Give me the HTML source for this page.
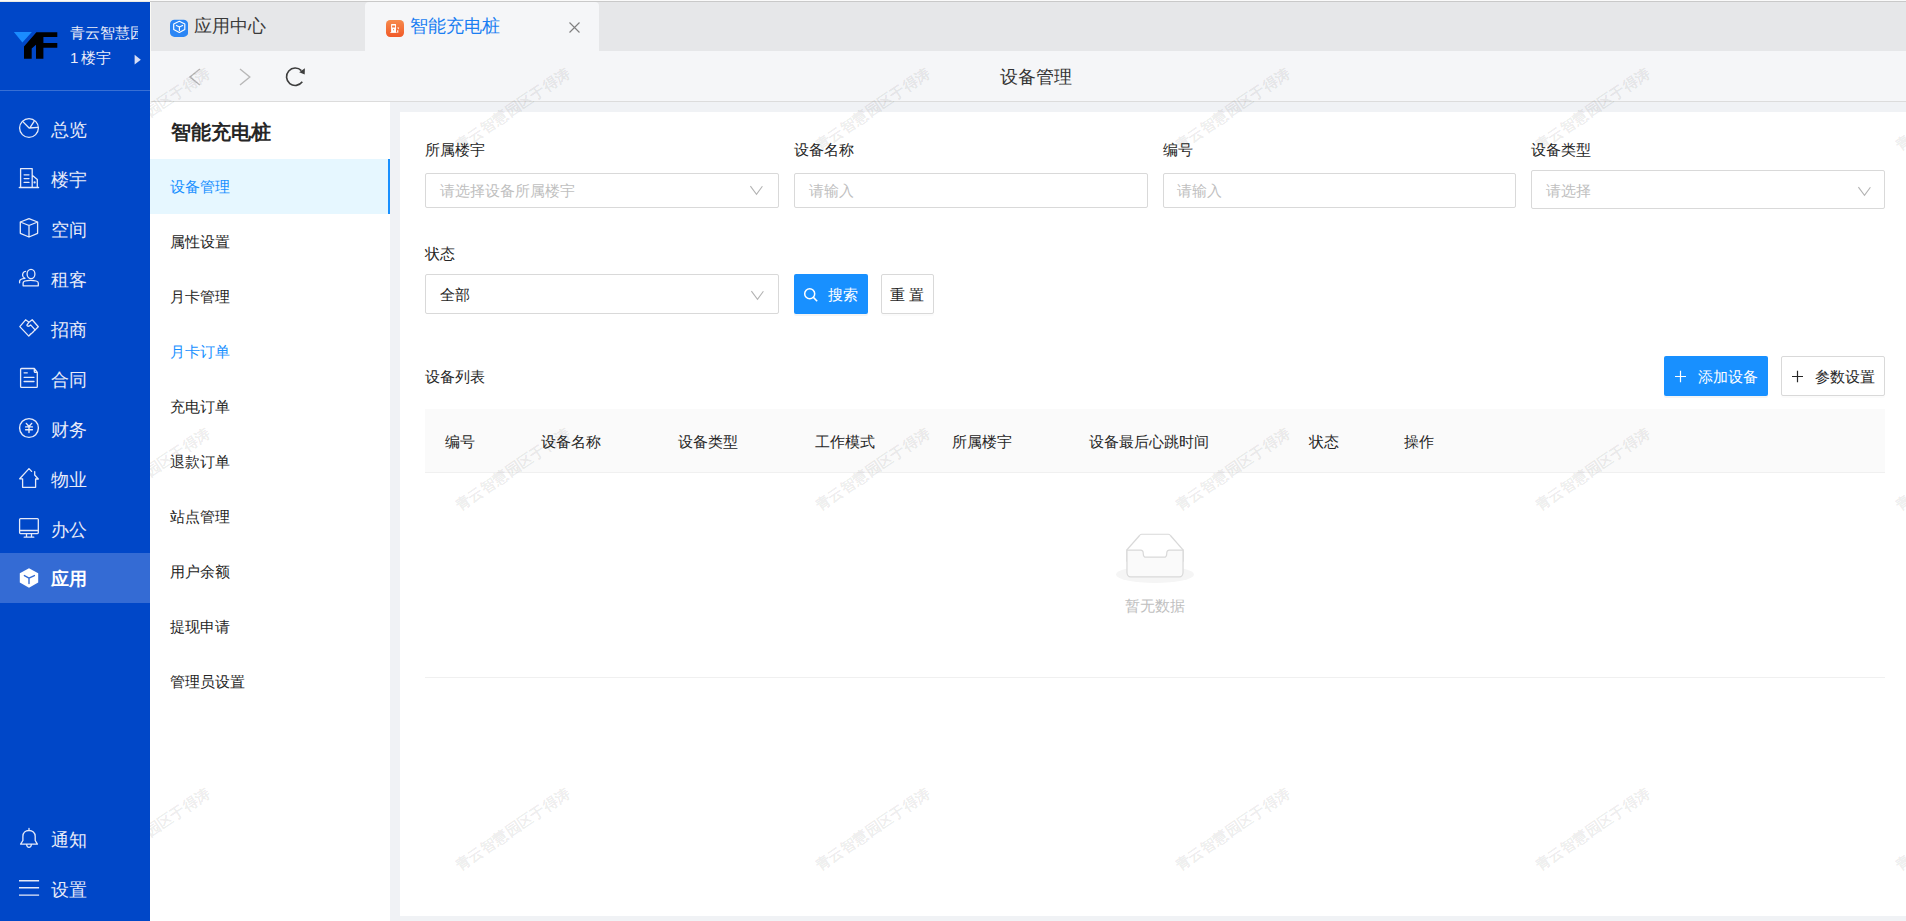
<!DOCTYPE html>
<html><head><meta charset="utf-8">
<style>
*{box-sizing:border-box;margin:0;padding:0}
html,body{width:1906px;height:921px;overflow:hidden;background:#f0f2f5;font-family:"Liberation Sans",sans-serif;color:#333}
.abs{position:absolute}
.t{position:absolute;white-space:nowrap;line-height:1}
#side{position:absolute;left:0;top:0;width:150px;height:921px;background:#0047c8}
.mi{position:absolute;left:0;width:150px;height:50px}
.mi .ic{position:absolute;left:19px;top:10px;width:20px;height:20px}
.mi .tx{position:absolute;left:51px;top:12px;font-size:18px;line-height:20px;color:#eef0fa;white-space:nowrap}
.sub{position:absolute;left:150px;width:240px;height:55px}
.sub .tx{position:absolute;left:20px;top:19px;font-size:15px;line-height:17px;color:#333;white-space:nowrap}
.lbl{position:absolute;font-size:15px;line-height:17px;color:#262626;white-space:nowrap}
.inp{position:absolute;border:1px solid #d9d9d9;border-radius:2px;background:#fff}
.ph{position:absolute;left:14px;font-size:15px;line-height:17px;color:#bfbfbf;white-space:nowrap}
.th{position:absolute;top:433px;font-size:15px;line-height:17px;color:#262626;white-space:nowrap}
</style></head><body>
<!-- top strip -->
<div class="abs" style="left:0;top:0;width:1906px;height:2px;background:#fafafa"></div>
<div class="abs" style="left:150px;top:1px;width:1756px;height:1px;background:#c9c9c9"></div><div class="abs" style="left:0;top:1px;width:150px;height:1px;background:#ece9e2"></div>

<!-- tab bar -->
<div class="abs" style="left:150px;top:2px;width:1756px;height:49px;background:#e6e7e9"></div>
<div class="abs" style="left:150px;top:2px;width:1px;height:99px;background:#fbfaf5"></div>
<!-- active tab -->
<div class="abs" style="left:365px;top:2px;width:234px;height:49px;background:#f5f6f8;border-radius:4px 4px 0 0"></div>

<!-- nav bar -->
<div class="abs" style="left:151px;top:51px;width:1755px;height:50px;background:#f5f6f8"></div>
<div class="abs" style="left:151px;top:101px;width:1755px;height:1px;background:#dcdcdc"></div>

<!-- sub sidebar -->
<div class="abs" style="left:150px;top:102px;width:240px;height:819px;background:#fff"></div>

<!-- card -->
<div class="abs" style="left:400px;top:112px;width:1506px;height:804px;background:#fff"></div>


<!-- tabs content -->
<svg class="abs" style="left:170px;top:19px" width="18" height="19" viewBox="0 0 18 19">
<rect x="0" y="0.8" width="18.1" height="17.1" rx="4.5" fill="#2b86f5"/>
<path fill="none" stroke="#fff" stroke-width="1.15" stroke-linejoin="round" stroke-linecap="round" d="M9.3 2.3L14.8 5V10.6L9.3 13.5L3.7 10.6V5ZM6.4 6.4L9.4 7.9L12.6 6.4M9.4 7.9V11.4"/></svg>
<div class="t" style="left:194px;top:17px;font-size:18px;color:#3a3a3a">应用中心</div>
<svg class="abs" style="left:386px;top:20px" width="18" height="17" viewBox="0 0 18 17">
<defs><linearGradient id="og" x1="0" y1="0" x2="0" y2="1"><stop offset="0" stop-color="#f68a4c"/><stop offset="1" stop-color="#f15a29"/></linearGradient></defs>
<rect x="0" y="0" width="18" height="17" rx="4.2" fill="url(#og)"/>
<path fill="#fff" fill-rule="evenodd" d="M5.6 4H9.5Q10 4 10 4.6V12.6H5.1V4.6Q5.1 4 5.6 4ZM6.1 5.5V7.4H9.1V5.5ZM7.6 8.7L6.9 9.9Q7.6 10.5 8.3 9.9Z"/>
<path fill="#fff" d="M4.3 12.3H10.6V12.9H4.3ZM11.2 10.2H12.3V12.7H11.2ZM11.3 7.5H13.2L12.3 9.6Z"/></svg>
<div class="t" style="left:410px;top:17px;font-size:18px;color:#1a7ef2">智能充电桩</div>
<svg class="abs" style="left:568px;top:21px" width="13" height="13" viewBox="0 0 13 13"><path d="M1.5 1.5L11.5 11.5M11.5 1.5L1.5 11.5" stroke="#808080" stroke-width="1.15"/></svg>

<!-- nav -->
<svg class="abs" style="left:185px;top:64px" width="130" height="26" viewBox="0 0 130 26">
<path fill="none" stroke="#b8b8b8" stroke-width="1.4" d="M14.8 5L5 13L14.8 21M55 5L64.8 13L55 21"/>
<path fill="none" stroke="#3d3d3d" stroke-width="1.6" d="M117.3 17.8A8.7 8.7 0 1 1 116.4 6.6"/>
<path fill="#3d3d3d" d="M119.9 4.2L119.7 10.4L114.2 8.3Z"/>
</svg>
<div class="t" style="left:1000px;top:68px;font-size:18px;color:#333">设备管理</div>

<!-- sub sidebar -->
<div class="t" style="left:170.5px;top:122px;font-size:20px;font-weight:bold;color:#262626">智能充电桩</div>
<div class="abs" style="left:150px;top:159px;width:240px;height:55px;background:#e6f7ff"></div>
<div class="abs" style="left:388px;top:159px;width:2px;height:55px;background:#1890ff"></div>
<div class="t" style="left:170px;top:179px;font-size:15px;color:#1890ff">设备管理</div>
<div class="t" style="left:170px;top:234px;font-size:15px;color:#262626">属性设置</div>
<div class="t" style="left:170px;top:289px;font-size:15px;color:#262626">月卡管理</div>
<div class="t" style="left:170px;top:344px;font-size:15px;color:#1890ff">月卡订单</div>
<div class="t" style="left:170px;top:399px;font-size:15px;color:#262626">充电订单</div>
<div class="t" style="left:170px;top:454px;font-size:15px;color:#262626">退款订单</div>
<div class="t" style="left:170px;top:509px;font-size:15px;color:#262626">站点管理</div>
<div class="t" style="left:170px;top:564px;font-size:15px;color:#262626">用户余额</div>
<div class="t" style="left:170px;top:619px;font-size:15px;color:#262626">提现申请</div>
<div class="t" style="left:170px;top:674px;font-size:15px;color:#262626">管理员设置</div>

<!-- form -->
<div class="t" style="left:425px;top:142px;font-size:15px;color:#262626">所属楼宇</div>
<div class="t" style="left:794px;top:142px;font-size:15px;color:#262626">设备名称</div>
<div class="t" style="left:1163px;top:142px;font-size:15px;color:#262626">编号</div>
<div class="t" style="left:1531px;top:142px;font-size:15px;color:#262626">设备类型</div>

<div class="inp" style="left:425px;top:173px;width:354px;height:35px"></div>
<div class="t" style="left:440px;top:182.5px;font-size:15px;color:#bfbfbf">请选择设备所属楼宇</div>
<svg class="abs" style="left:749px;top:184px" width="15" height="12" viewBox="0 0 15 12"><path d="M1.4 2.2L7.5 10.4L13.4 2.2" fill="none" stroke="#b3b3b3" stroke-width="1.1"/></svg>
<div class="inp" style="left:794px;top:173px;width:354px;height:35px"></div>
<div class="t" style="left:809px;top:182.5px;font-size:15px;color:#bfbfbf">请输入</div>
<div class="inp" style="left:1163px;top:173px;width:353px;height:35px"></div>
<div class="t" style="left:1177px;top:182.5px;font-size:15px;color:#bfbfbf">请输入</div>
<div class="inp" style="left:1531px;top:170px;width:354px;height:39px"></div>
<div class="t" style="left:1546px;top:182.5px;font-size:15px;color:#bfbfbf">请选择</div>
<svg class="abs" style="left:1856.5px;top:184.5px" width="15" height="12" viewBox="0 0 15 12"><path d="M1.4 2.2L7.5 10.4L13.4 2.2" fill="none" stroke="#b3b3b3" stroke-width="1.1"/></svg>

<div class="t" style="left:425px;top:246px;font-size:15px;color:#262626">状态</div>
<div class="inp" style="left:425px;top:274px;width:354px;height:40px"></div>
<div class="t" style="left:440px;top:287px;font-size:15px;color:#262626">全部</div>
<svg class="abs" style="left:750px;top:289px" width="15" height="12" viewBox="0 0 15 12"><path d="M1.4 2.2L7.5 10.4L13.4 2.2" fill="none" stroke="#b3b3b3" stroke-width="1.1"/></svg>

<div class="abs" style="left:794px;top:274px;width:74px;height:40px;background:#1890ff;border-radius:2px;box-shadow:0 2px 0 rgba(0,0,0,0.045)"></div>
<svg class="abs" style="left:803px;top:287px" width="16" height="16" viewBox="0 0 16 16"><circle cx="6.7" cy="6.7" r="5" fill="none" stroke="#fff" stroke-width="1.5"/><path d="M10.4 10.4L14.2 14.2" stroke="#fff" stroke-width="1.5"/></svg>
<div class="t" style="left:828px;top:287px;font-size:15px;color:#fff">搜索</div>
<div class="inp" style="left:881px;top:274px;width:53px;height:40px;box-shadow:0 2px 0 rgba(0,0,0,0.016)"></div>
<div class="t" style="left:890px;top:287px;font-size:15px;color:#262626;letter-spacing:4px">重置</div>

<!-- table -->
<div class="t" style="left:425px;top:369px;font-size:15px;color:#262626">设备列表</div>
<div class="abs" style="left:1664px;top:356px;width:104px;height:40px;background:#1890ff;border-radius:2px;box-shadow:0 2px 0 rgba(0,0,0,0.045)"></div>
<svg class="abs" style="left:1674px;top:370px" width="13" height="13" viewBox="0 0 13 13"><path d="M6.5 0.8V12.2M1 6.5H12" stroke="#fff" stroke-width="1.2"/></svg>
<div class="t" style="left:1698px;top:369px;font-size:15px;color:#fff">添加设备</div>
<div class="inp" style="left:1781px;top:356px;width:104px;height:40px;box-shadow:0 2px 0 rgba(0,0,0,0.016)"></div>
<svg class="abs" style="left:1791px;top:370px" width="13" height="13" viewBox="0 0 13 13"><path d="M6.5 0.8V12.2M1 6.5H12" stroke="#262626" stroke-width="1.2"/></svg>
<div class="t" style="left:1815px;top:369px;font-size:15px;color:#262626">参数设置</div>

<div class="abs" style="left:425px;top:409px;width:1460px;height:63px;background:#fafafa"></div>
<div class="abs" style="left:425px;top:472px;width:1460px;height:1px;background:#f0f0f0"></div>
<div class="th" style="left:445px">编号</div>
<div class="th" style="left:541px">设备名称</div>
<div class="th" style="left:678px">设备类型</div>
<div class="th" style="left:815px">工作模式</div>
<div class="th" style="left:952px">所属楼宇</div>
<div class="th" style="left:1089px">设备最后心跳时间</div>
<div class="th" style="left:1309px">状态</div>
<div class="th" style="left:1404px">操作</div>

<svg class="abs" style="left:1116px;top:533px" width="78" height="50" viewBox="0 0 64 41"><g transform="translate(0 1)" fill="none" fill-rule="evenodd"><ellipse fill="#f5f5f5" cx="32" cy="33" rx="32" ry="7"/><g fill-rule="nonzero" stroke="#d9d9d9"><path d="M55 12.76L44.854 1.258C44.367.474 43.656 0 42.907 0H21.093c-.749 0-1.46.474-1.947 1.257L9 12.761V22h46v-9.24z"/><path d="M41.613 15.931c0-1.605.994-2.93 2.227-2.931H55v18.137C55 33.26 53.68 35 52.05 35h-40.1C10.32 35 9 33.259 9 31.137V13h11.16c1.233 0 2.227 1.323 2.227 2.928v.022c0 1.605 1.005 2.901 2.237 2.901h14.752c1.232 0 2.237-1.308 2.237-2.913v-.007z" fill="#fafafa"/></g></g></svg>
<div class="t" style="left:1125px;top:598px;font-size:15px;color:#bfbfbf">暂无数据</div>
<div class="abs" style="left:425px;top:677px;width:1460px;height:1px;background:#f0f0f0"></div>

<!-- watermark -->
<div class="abs" style="left:150px;top:52px;width:1756px;height:869px;overflow:hidden;pointer-events:none"><div class="t" style="left:3.3px;top:57.0px;width:0;height:0"><div style="position:absolute;left:0;top:0;transform:translate(-50%,-50%) rotate(-34deg);font-size:14.8px;line-height:16px;font-weight:bold;color:rgba(0,0,0,0.085);white-space:nowrap">青云智慧园区于得涛</div></div><div class="t" style="left:363.3px;top:57.0px;width:0;height:0"><div style="position:absolute;left:0;top:0;transform:translate(-50%,-50%) rotate(-34deg);font-size:14.8px;line-height:16px;font-weight:bold;color:rgba(0,0,0,0.085);white-space:nowrap">青云智慧园区于得涛</div></div><div class="t" style="left:723.3px;top:57.0px;width:0;height:0"><div style="position:absolute;left:0;top:0;transform:translate(-50%,-50%) rotate(-34deg);font-size:14.8px;line-height:16px;font-weight:bold;color:rgba(0,0,0,0.085);white-space:nowrap">青云智慧园区于得涛</div></div><div class="t" style="left:1083.3px;top:57.0px;width:0;height:0"><div style="position:absolute;left:0;top:0;transform:translate(-50%,-50%) rotate(-34deg);font-size:14.8px;line-height:16px;font-weight:bold;color:rgba(0,0,0,0.085);white-space:nowrap">青云智慧园区于得涛</div></div><div class="t" style="left:1443.3px;top:57.0px;width:0;height:0"><div style="position:absolute;left:0;top:0;transform:translate(-50%,-50%) rotate(-34deg);font-size:14.8px;line-height:16px;font-weight:bold;color:rgba(0,0,0,0.085);white-space:nowrap">青云智慧园区于得涛</div></div><div class="t" style="left:1803.3px;top:57.0px;width:0;height:0"><div style="position:absolute;left:0;top:0;transform:translate(-50%,-50%) rotate(-34deg);font-size:14.8px;line-height:16px;font-weight:bold;color:rgba(0,0,0,0.085);white-space:nowrap">青云智慧园区于得涛</div></div><div class="t" style="left:3.3px;top:417.0px;width:0;height:0"><div style="position:absolute;left:0;top:0;transform:translate(-50%,-50%) rotate(-34deg);font-size:14.8px;line-height:16px;font-weight:bold;color:rgba(0,0,0,0.085);white-space:nowrap">青云智慧园区于得涛</div></div><div class="t" style="left:363.3px;top:417.0px;width:0;height:0"><div style="position:absolute;left:0;top:0;transform:translate(-50%,-50%) rotate(-34deg);font-size:14.8px;line-height:16px;font-weight:bold;color:rgba(0,0,0,0.085);white-space:nowrap">青云智慧园区于得涛</div></div><div class="t" style="left:723.3px;top:417.0px;width:0;height:0"><div style="position:absolute;left:0;top:0;transform:translate(-50%,-50%) rotate(-34deg);font-size:14.8px;line-height:16px;font-weight:bold;color:rgba(0,0,0,0.085);white-space:nowrap">青云智慧园区于得涛</div></div><div class="t" style="left:1083.3px;top:417.0px;width:0;height:0"><div style="position:absolute;left:0;top:0;transform:translate(-50%,-50%) rotate(-34deg);font-size:14.8px;line-height:16px;font-weight:bold;color:rgba(0,0,0,0.085);white-space:nowrap">青云智慧园区于得涛</div></div><div class="t" style="left:1443.3px;top:417.0px;width:0;height:0"><div style="position:absolute;left:0;top:0;transform:translate(-50%,-50%) rotate(-34deg);font-size:14.8px;line-height:16px;font-weight:bold;color:rgba(0,0,0,0.085);white-space:nowrap">青云智慧园区于得涛</div></div><div class="t" style="left:1803.3px;top:417.0px;width:0;height:0"><div style="position:absolute;left:0;top:0;transform:translate(-50%,-50%) rotate(-34deg);font-size:14.8px;line-height:16px;font-weight:bold;color:rgba(0,0,0,0.085);white-space:nowrap">青云智慧园区于得涛</div></div><div class="t" style="left:3.3px;top:777.0px;width:0;height:0"><div style="position:absolute;left:0;top:0;transform:translate(-50%,-50%) rotate(-34deg);font-size:14.8px;line-height:16px;font-weight:bold;color:rgba(0,0,0,0.085);white-space:nowrap">青云智慧园区于得涛</div></div><div class="t" style="left:363.3px;top:777.0px;width:0;height:0"><div style="position:absolute;left:0;top:0;transform:translate(-50%,-50%) rotate(-34deg);font-size:14.8px;line-height:16px;font-weight:bold;color:rgba(0,0,0,0.085);white-space:nowrap">青云智慧园区于得涛</div></div><div class="t" style="left:723.3px;top:777.0px;width:0;height:0"><div style="position:absolute;left:0;top:0;transform:translate(-50%,-50%) rotate(-34deg);font-size:14.8px;line-height:16px;font-weight:bold;color:rgba(0,0,0,0.085);white-space:nowrap">青云智慧园区于得涛</div></div><div class="t" style="left:1083.3px;top:777.0px;width:0;height:0"><div style="position:absolute;left:0;top:0;transform:translate(-50%,-50%) rotate(-34deg);font-size:14.8px;line-height:16px;font-weight:bold;color:rgba(0,0,0,0.085);white-space:nowrap">青云智慧园区于得涛</div></div><div class="t" style="left:1443.3px;top:777.0px;width:0;height:0"><div style="position:absolute;left:0;top:0;transform:translate(-50%,-50%) rotate(-34deg);font-size:14.8px;line-height:16px;font-weight:bold;color:rgba(0,0,0,0.085);white-space:nowrap">青云智慧园区于得涛</div></div><div class="t" style="left:1803.3px;top:777.0px;width:0;height:0"><div style="position:absolute;left:0;top:0;transform:translate(-50%,-50%) rotate(-34deg);font-size:14.8px;line-height:16px;font-weight:bold;color:rgba(0,0,0,0.085);white-space:nowrap">青云智慧园区于得涛</div></div></div>
<!-- sidebar -->
<div id="side" style="top:2px;height:919px"></div>
<div class="abs" style="left:0;top:90px;width:150px;height:1px;background:rgba(255,255,255,0.22)"></div>
<div class="abs" style="left:0;top:553px;width:150px;height:50px;background:#346bd4"></div>


<!-- logo -->
<svg class="abs" style="left:0;top:0" width="150" height="90" viewBox="0 0 150 90">
<polygon fill="#1a8cff" points="13.9,32 31.9,32 22.4,42.5"/>
<polygon fill="#000" points="36.4,32.2 57.3,32.2 57.3,37.1 43.4,37.1 43.4,43.1 57.3,43.1 57.3,47.7 43.4,47.7 43.4,58.8 36,58.8 36,44.8 31.7,48.5 31.7,58.8 24,58.8 24,46.4"/>
<polygon fill="#d8def5" points="134.6,54.8 140.8,59.7 134.6,64.6"/>
</svg>
<div class="abs" style="left:70px;top:22px;width:68px;height:22px;overflow:hidden"><div class="t" style="left:0;top:3px;font-size:15px;color:#e9ecf8">青云智慧园区</div></div>
<div class="t" style="left:70px;top:49.5px;font-size:15px;color:#e9ecf8">1</div><div class="t" style="left:80.5px;top:49.5px;font-size:15px;color:#e9ecf8">楼宇</div>

<svg class="abs" style="left:15px;top:114px" width="28" height="28" viewBox="0 0 28 28" fill="none" stroke="#e6eaf8" stroke-width="1.3" stroke-linecap="round" stroke-linejoin="round">
<circle cx="14" cy="14" r="9.4"/><path d="M14.1 14L7.6 7.4M14.1 14L23.1 13.4M15.2 13.4L19.1 7.3"/></svg>
<svg class="abs" style="left:15px;top:164px" width="28" height="28" viewBox="0 0 28 28" fill="none" stroke="#e6eaf8" stroke-width="1.3" stroke-linecap="round" stroke-linejoin="round">
<path d="M5.6 23.4V4.6H17.2V23.4M17.2 11.3L22.3 15.5V23.4M4.3 23.5H23.6M9.1 10.8H14M9.1 14.6H14M9.1 18.4H14"/><circle cx="19.6" cy="18.4" r="0.5"/></svg>
<svg class="abs" style="left:15px;top:214px" width="28" height="28" viewBox="0 0 28 28" fill="none" stroke="#e6eaf8" stroke-width="1.3" stroke-linecap="round" stroke-linejoin="round">
<path d="M14 4.7L22.6 8V19.3L14 23L5.3 19.3V8ZM5.3 8L14 11.5L22.6 8M14 11.5V23"/></svg>
<svg class="abs" style="left:15px;top:264px" width="28" height="28" viewBox="0 0 28 28" fill="none" stroke="#e6eaf8" stroke-width="1.3" stroke-linecap="round" stroke-linejoin="round">
<ellipse cx="16" cy="10" rx="3.9" ry="4.6"/><path d="M8.1 21.8V19C8.1 17.5 11.5 16.4 15.7 16.4C19.9 16.4 23.3 17.5 23.3 19V21.8ZM10.6 7.3C8.6 7.4 7.5 9.3 7.6 11.2C7.6 12.5 8.4 13.6 10 14.3C6.6 14.7 4.6 16 4.6 17.2V18.8"/></svg>
<svg class="abs" style="left:15px;top:314px" width="28" height="28" viewBox="0 0 28 28" fill="none" stroke="#e6eaf8" stroke-width="1.3" stroke-linecap="round" stroke-linejoin="round">
<path d="M4.8 12.6L10.6 5.8L14 8.2L17.2 5.8L23.3 12.8L13.8 22.1ZM14 8.2L11.9 11.2Q12.8 12.9 14.3 11.9L15.6 10.9L20.3 16.1M14.8 20.8L16.2 19.6M17 19L18.4 17.8"/></svg>
<svg class="abs" style="left:15px;top:364px" width="28" height="28" viewBox="0 0 28 28" fill="none" stroke="#e6eaf8" stroke-width="1.3" stroke-linecap="round" stroke-linejoin="round">
<path d="M6.5 4.5H19.3L22.3 8.4V22.5Q22.3 23.4 21.4 23.4H6.5Q5.6 23.4 5.6 22.5V5.4Q5.6 4.5 6.5 4.5ZM19.3 4.5V7.5Q19.3 8.4 20.2 8.4H22.3M9.1 8.8H12.3M9.1 13.3H19M9.1 17.5H19"/></svg>
<svg class="abs" style="left:15px;top:414px" width="28" height="28" viewBox="0 0 28 28" fill="none" stroke="#e6eaf8" stroke-width="1.4" stroke-linecap="round" stroke-linejoin="round">
<circle cx="14" cy="14" r="9.4"/><path d="M11.3 9.4L14 12.5L16.7 9.4M10.6 12.9H17.4M10.6 15.8H17.4M14 12.5V18.6"/></svg>
<svg class="abs" style="left:15px;top:464px" width="28" height="28" viewBox="0 0 28 28" fill="none" stroke="#e6eaf8" stroke-width="1.3" stroke-linecap="round" stroke-linejoin="round">
<path d="M16.6 7.4L14 4.6L4.7 14.8H7.6V23.3H20.6V15H23.3L19.7 11V7.6"/></svg>
<svg class="abs" style="left:15px;top:514px" width="28" height="28" viewBox="0 0 28 28" fill="none" stroke="#e6eaf8" stroke-width="1.3" stroke-linecap="round" stroke-linejoin="round">
<path d="M5.6 4.6H22.4Q23.3 4.6 23.3 5.5V18.6Q23.3 19.6 22.4 19.6H5.6Q4.6 19.6 4.6 18.6V5.5Q4.6 4.6 5.6 4.6ZM4.6 16.5H23.3M11.5 19.8V23M16.5 19.8V23M9.2 23.2H18.8"/></svg>
<svg class="abs" style="left:15px;top:564px" width="28" height="28" viewBox="0 0 28 28">
<path fill="#fff" d="M14 4.2L23.2 9.2V18.6L14 23.8L4.8 18.6V9.2Z"/><path fill="none" stroke="#346bd4" stroke-width="1.4" stroke-linecap="round" stroke-linejoin="round" d="M9.4 11.6L14 14.1L19.4 11.6M14 14.1V19.6"/></svg>

<div class="t" style="left:51px;top:120.5px;font-size:18px;color:#e9ecf8">总览</div>
<div class="t" style="left:51px;top:170.5px;font-size:18px;color:#e9ecf8">楼宇</div>
<div class="t" style="left:51px;top:220.5px;font-size:18px;color:#e9ecf8">空间</div>
<div class="t" style="left:51px;top:270.5px;font-size:18px;color:#e9ecf8">租客</div>
<div class="t" style="left:51px;top:320.5px;font-size:18px;color:#e9ecf8">招商</div>
<div class="t" style="left:51px;top:370.5px;font-size:18px;color:#e9ecf8">合同</div>
<div class="t" style="left:51px;top:420.5px;font-size:18px;color:#e9ecf8">财务</div>
<div class="t" style="left:51px;top:470.5px;font-size:18px;color:#e9ecf8">物业</div>
<div class="t" style="left:51px;top:520.5px;font-size:18px;color:#e9ecf8">办公</div>
<div class="t" style="left:51px;top:570px;font-size:18px;color:#fff;font-weight:bold">应用</div>

<svg class="abs" style="left:15px;top:824px" width="28" height="28" viewBox="0 0 28 28" fill="none" stroke="#e6eaf8" stroke-width="1.3" stroke-linecap="round" stroke-linejoin="round">
<path d="M14 4.4V6.5M5.6 20.2H22.4L20.2 16.5V12.3C20.2 8.8 17.4 6.5 14 6.5C10.6 6.5 7.9 8.8 7.9 12.3V16.5ZM11.6 20.5C11.8 22.2 12.8 23.3 14 23.3C15.2 23.3 16.2 22.2 16.4 20.5"/></svg>
<svg class="abs" style="left:15px;top:874px" width="28" height="28" viewBox="0 0 28 28" fill="none" stroke="#e6eaf8" stroke-width="1.4">
<path d="M4 6.7H24.1M4 13.8H24.1M4 21.1H24.1"/></svg>
<div class="t" style="left:51px;top:830.5px;font-size:18px;color:#e9ecf8">通知</div>
<div class="t" style="left:51px;top:881px;font-size:18px;color:#e9ecf8">设置</div>
</body></html>
